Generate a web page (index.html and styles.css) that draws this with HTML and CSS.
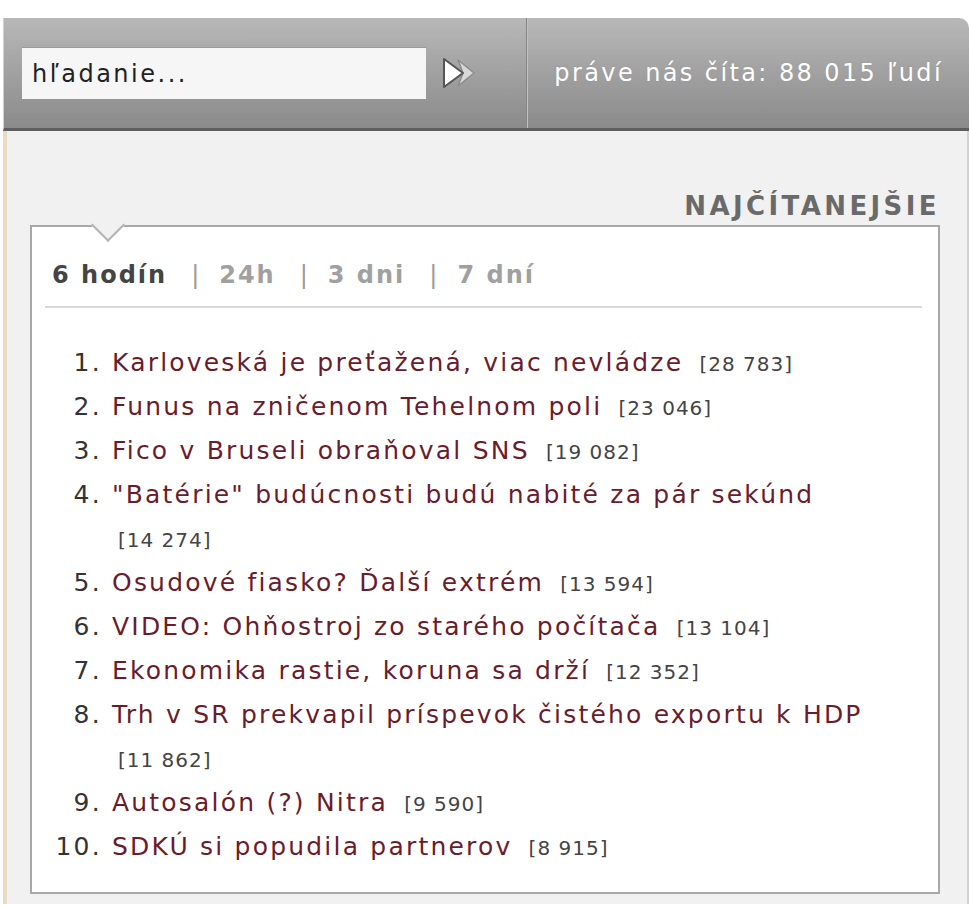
FILE: index.html
```html
<!DOCTYPE html>
<html lang="sk">
<head>
  <meta charset="UTF-8">
  <title>Najčítanejšie</title>
  <link rel="stylesheet" href="styles.css">
</head>
<body>

<div class="widget">
  <!-- Horna lista s vyhladavanim -->
  <div class="topbar">
    <div class="search">
      <input type="text" class="search-input" value="hľadanie...">
      <button class="search-btn" type="button">
        <svg width="38" height="36" viewBox="0 0 38 36">
          <path d="M17 5 L33 18 L17 31 L22 18 Z" fill="#d8d8d8" stroke="#8c8c8c" stroke-width="1.5" stroke-linejoin="round"/>
          <path d="M3 4 L22 18 L3 32 Z" fill="#ffffff" stroke="#555" stroke-width="2" stroke-linejoin="round"/>
        </svg>
      </button>
    </div>
    <div class="readers">práve nás číta: 88 015 ľudí</div>
  </div>

  <div class="panel">
    <h2 class="panel-title">NAJČÍTANEJŠIE</h2>

    <div class="box">
      <div class="tabs">
        <a class="tab active">6 hodín</a><span class="sep">|</span><a class="tab">24h</a><span class="sep">|</span><a class="tab">3 dni</a><span class="sep">|</span><a class="tab">7 dní</a>
      </div>

      <ol class="top-list">
        <li><a>Karloveská je preťažená, viac nevládze</a> <span class="count">[28 783]</span></li>
        <li><a>Funus na zničenom Tehelnom poli</a> <span class="count">[23 046]</span></li>
        <li><a>Fico v Bruseli obraňoval SNS</a> <span class="count">[19 082]</span></li>
        <li><a>"Batérie" budúcnosti budú nabité za pár sekúnd</a> <span class="count">[14 274]</span></li>
        <li><a>Osudové fiasko? Ďalší extrém</a> <span class="count">[13 594]</span></li>
        <li><a>VIDEO: Ohňostroj zo starého počítača</a> <span class="count">[13 104]</span></li>
        <li><a>Ekonomika rastie, koruna sa drží</a> <span class="count">[12 352]</span></li>
        <li><a>Trh v SR prekvapil príspevok čistého exportu k HDP</a> <span class="count">[11 862]</span></li>
        <li><a>Autosalón (?) Nitra</a> <span class="count">[9 590]</span></li>
        <li><a>SDKÚ si popudila partnerov</a> <span class="count">[8 915]</span></li>
      </ol>
    </div>
  </div>
</div>

</body>
</html>
```
FILE: styles.css
```css
body {
  margin: 0;
  background: #fff;
  font-family: "DejaVu Sans", Verdana, sans-serif;
  color: #333;
}
.widget {
  margin: 18px 0 0 3px;
}

/* horna lista */
.topbar {
  display: flex;
  height: 110px;
  background: linear-gradient(#b8b8b8, #8a8a8a);
  border-bottom: 3px solid #5e5e5e;
  border-left: 1px solid #d0d0d0;
  border-top-right-radius: 10px;
}
.search {
  width: 523px;
  display: flex;
  align-items: center;
  padding-left: 18px;
  box-sizing: border-box;
  border-right: 1px solid #858585;
  box-shadow: 1px 0 0 #c2c2c2;
}
.search-input {
  width: 404px;
  height: 52px;
  box-sizing: border-box;
  border: none;
  border-top: 1px solid #9a9a9a;
  background: #f6f6f6;
  padding: 0 10px;
  font-family: "DejaVu Sans", Verdana, sans-serif;
  font-size: 24px;
  letter-spacing: 2.5px;
  color: #222;
}
.search-btn {
  margin-left: 15px;
  background: none;
  border: none;
  padding: 0;
  display: flex;
}
.readers {
  flex: 1;
  display: flex;
  align-items: center;
  justify-content: flex-end;
  padding-right: 26px;
  color: #fff;
  font-size: 24px;
  letter-spacing: 2.4px;
  text-shadow: 0 0 2px #999;
}

/* panel */
.panel {
  background: #f1f1f1;
  border-left: 4px solid #e8ddc3;
  border-right: 2px solid #d2d2d2;
  padding: 60px 27px 10px 23px;
}
.panel-title {
  margin: 0 0 4px;
  text-align: right;
  font-size: 26px;
  font-weight: 900;
  letter-spacing: 3.4px;
  color: #6a6a6a;
  line-height: 30px;
}
.box {
  position: relative;
  background: #fff;
  border: 2px solid #a8a8a8;
  padding: 0 16px 23px 13px;
}
.box::before {
  content: "";
  position: absolute;
  top: -14px;
  left: 64px;
  width: 22px;
  height: 22px;
  background: #f1f1f1;
  border-right: 2px solid #b4b4b4;
  border-bottom: 2px solid #b4b4b4;
  transform: rotate(45deg);
}
.tabs {
  padding: 30px 0 13px 7px;
  border-bottom: 2px solid #d8d8d8;
  font-size: 24px;
  font-weight: bold;
  letter-spacing: 2px;
  color: #a0a0a0;
  line-height: 36px;
}
.tab { color: #a0a0a0; }
.tab.active { color: #444; }
.sep {
  font-weight: normal;
  color: #999;
  margin: 0 18px 0 24px;
}

.top-list {
  margin: 33px 0 0;
  padding-left: 67px;
  font-size: 25px;
  letter-spacing: 2.2px;
  line-height: 44px;
  color: #333;
}
.top-list a { color: #6b1c2c; }
.count {
  font-size: 20px;
  letter-spacing: 1px;
  line-height: 1;
  white-space: nowrap;
  color: #444;
  margin-left: 6px;
}
```
